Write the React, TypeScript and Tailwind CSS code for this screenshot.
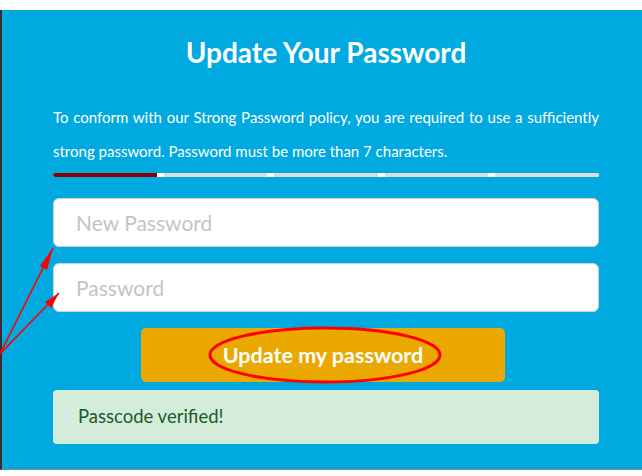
import React from "react";

const segments = [true, false, false, false, false];

export default function App() {
  return (
    <div className="relative h-[476px] w-[642px] overflow-hidden bg-white font-['Lato','Noto_Sans',sans-serif]">
      <div className="mt-[10px] w-[650px] border-b border-l-2 border-b-[#8a8a8a] border-l-[#3b2d2b] bg-[#00a9df] pb-[25px] pl-[51px] pt-[24px]">
        <div className="w-[546px]">
          <h1 className="text-center text-[28px] font-bold leading-[36px] text-white">
            Update Your Password
          </h1>
          <p className="mt-[30px] text-justify text-[15px] leading-[34px] text-white">
            To conform with our Strong Password policy, you are required to use a sufficiently
            strong password. Password must be more than 7 characters.
          </p>
          <div className="mt-[5px] flex h-[4px] gap-[7px] overflow-hidden rounded-full bg-white">
            {segments.map((on, i) => (
              <div key={i} className={on ? "flex-1 bg-[#8b0000]" : "flex-1 bg-[#dcdcdc]"} />
            ))}
          </div>
          <input
            type="password"
            placeholder="New Password"
            className="mt-[21px] block h-[49px] w-full rounded-[6px] border border-[#d0d0d0] bg-white px-[22px] text-[21px] text-gray-700 placeholder:text-[#c4c4c4] outline-none"
          />
          <input
            type="password"
            placeholder="Password"
            className="mt-[16px] block h-[49px] w-full rounded-[6px] border border-[#d0d0d0] bg-white px-[22px] text-[21px] text-gray-700 placeholder:text-[#c4c4c4] outline-none"
          />
          <div className="mt-[16px] flex justify-center">
            <button className="ml-[-6px] h-[54px] w-[364px] rounded-[5px] bg-[#eaa800] text-[21.5px] font-bold text-white">
              Update my password
            </button>
          </div>
          <div className="mt-[8px] flex h-[54px] items-center rounded-[4px] bg-[#d4eddb] px-[25px] text-[18.5px] text-[#1c5a2a]">
            Passcode verified!
          </div>
        </div>
      </div>

      {/* red annotations drawn over the screenshot */}
      <svg className="pointer-events-none absolute left-0 top-0" width="642" height="476" viewBox="0 0 642 476">
        <ellipse cx="325" cy="355" rx="115" ry="27" fill="none" stroke="#ff0000" strokeWidth="3" />
        <line x1="0" y1="354" x2="53" y2="248" stroke="#ff0000" strokeWidth="1.6" />
        <polygon points="53,248 47,270 40,266" fill="#ff0000" />
        <line x1="0" y1="354" x2="59" y2="293" stroke="#ff0000" strokeWidth="1.6" />
        <polygon points="59,293 51,308 45,302" fill="#ff0000" />
      </svg>
    </div>
  );
}
